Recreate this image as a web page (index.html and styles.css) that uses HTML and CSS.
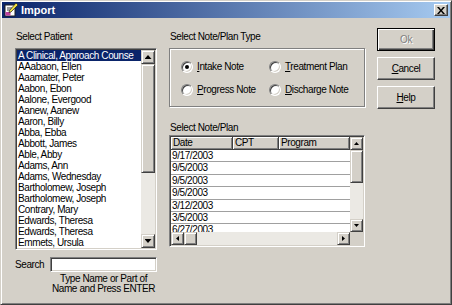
FILE: index.html
```html
<!DOCTYPE html>
<html lang="en">
<head>
    <meta charset="UTF-8">
    <title>Import</title>
    <link rel="stylesheet" href="styles.css">
</head>
<body>
<div class="window">
    <div class="titlebar">
        <svg class="app-icon" width="14" height="14" viewBox="0 0 14 14">
            <rect x="1" y="2" width="10" height="11" fill="#ffffff" stroke="#202020" stroke-width="1"/>
            <rect x="1.5" y="9" width="5" height="3.5" fill="#c040a0"/>
            <line x1="3" y1="5" x2="8" y2="5" stroke="#404040"/>
            <line x1="3" y1="7" x2="7" y2="7" stroke="#404040"/>
            <polygon points="12,0 14,2 7,9 5,9.5 5.5,7.5" fill="#f0e040" stroke="#202020" stroke-width="0.7"/>
        </svg>
        <span class="title">Import</span>
        <span class="close-btn">
            <svg width="8" height="7" viewBox="0 0 8 7">
                <path d="M0 0h2l2 2.5 2-2.5h2l-3 3.5 3 3.5h-2l-2-2.5-2 2.5h-2l3-3.5z" fill="#000"/>
            </svg>
        </span>
    </div>

    <div class="content">
        <!-- patient list -->
        <div class="col-patient">
            <div class="col-label">Select Patient</div>
            <div class="listbox">
                <ul class="list-items">
                    <li class="selected">A Clinical, Approach Counse</li>
                    <li>AAabaon, Ellen</li>
                    <li>Aaamater, Peter</li>
                    <li>Aabon, Ebon</li>
                    <li>Aalone, Evergood</li>
                    <li>Aanew, Aanew</li>
                    <li>Aaron, Billy</li>
                    <li>Abba, Ebba</li>
                    <li>Abbott, James</li>
                    <li>Able, Abby</li>
                    <li>Adams, Ann</li>
                    <li>Adams, Wednesday</li>
                    <li>Bartholomew, Joseph</li>
                    <li>Bartholomew, Joseph</li>
                    <li>Contrary, Mary</li>
                    <li>Edwards, Theresa</li>
                    <li>Edwards, Theresa</li>
                    <li>Emmets, Ursula</li>
                </ul>
                <div class="vscroll">
                    <span class="sb-btn arrow-up"></span>
                    <span class="sb-thumb list-thumb"></span>
                    <span class="sb-track"></span>
                    <span class="sb-btn arrow-down"></span>
                </div>
            </div>
            <div class="search-row">
                <span class="search-label">Search</span>
                <span class="search-input"></span>
            </div>
            <div class="search-hint">Type Name or Part of<br>Name and Press ENTER</div>
        </div>

        <!-- note type and note list -->
        <div class="col-notes">
            <div class="col-label">Select Note/Plan Type</div>
            <div class="groupbox">
                <div class="radio-item"><span class="radio checked"></span><span><u>I</u>ntake Note</span></div>
                <div class="radio-item"><span class="radio"></span><span><u>T</u>reatment Plan</span></div>
                <div class="radio-item"><span class="radio"></span><span><u>P</u>rogress Note</span></div>
                <div class="radio-item"><span class="radio"></span><span><u>D</u>ischarge Note</span></div>
            </div>
            <div class="col-label plan-label">Select Note/Plan</div>
            <div class="grid">
                <div class="grid-main">
                    <div class="grid-body">
                        <div class="grid-head">
                            <span class="head-cell cell-date">Date</span>
                            <span class="head-cell cell-cpt">CPT</span>
                            <span class="head-cell cell-program">Program</span>
                        </div>
                        <div class="grid-row">9/17/2003</div>
                        <div class="grid-row">9/5/2003</div>
                        <div class="grid-row">9/5/2003</div>
                        <div class="grid-row">9/5/2003</div>
                        <div class="grid-row">3/12/2003</div>
                        <div class="grid-row">3/5/2003</div>
                        <div class="grid-row">6/27/2003</div>
                    </div>
                    <div class="vscroll small">
                        <span class="sb-btn arrow-up"></span>
                        <span class="sb-thumb grid-thumb"></span>
                        <span class="sb-track"></span>
                        <span class="sb-btn arrow-down"></span>
                    </div>
                </div>
                <div class="hscroll">
                    <span class="sb-btn arrow-left"></span>
                    <span class="sb-thumb"></span>
                    <span class="sb-track"></span>
                    <span class="sb-btn arrow-right"></span>
                    <span class="sb-corner"></span>
                </div>
            </div>
        </div>

        <!-- buttons -->
        <div class="col-buttons">
            <span class="button default disabled">Ok</span>
            <span class="button"><u>C</u>ancel</span>
            <span class="button"><u>H</u>elp</span>
        </div>
    </div>
</div>
</body>
</html>
```

FILE: styles.css
```css
body {
    margin: 0;
    background-color: #d4d0c8;
    font-family: "Liberation Sans", Arial, sans-serif;
    font-size: 10px;
    letter-spacing: -0.4px;
    color: #000;
}

.window {
    width: 452px;
    height: 305px;
    box-sizing: border-box;
    border: 1px solid;
    border-color: #d4d0c8 #404040 #404040 #d4d0c8;
    box-shadow: inset 1px 1px #fff, inset -1px -1px #808080;
    padding: 1px;
    display: flex;
    flex-direction: column;
}

.titlebar {
    height: 16px;
    display: flex;
    align-items: center;
    background: linear-gradient(to right, #0a246a, #a6caf0);
    color: #fff;
}

.app-icon {
    margin-left: 2px;
    margin-right: 3px;
}

.title {
    flex: 1;
    font-weight: bold;
    font-size: 11px;
    letter-spacing: 0;
}

.close-btn {
    width: 14px;
    height: 12px;
    box-sizing: border-box;
    margin-right: 2px;
    background: #d4d0c8;
    border: 1px solid;
    border-color: #fff #404040 #404040 #fff;
    box-shadow: inset -1px -1px #808080;
    display: flex;
    align-items: center;
    justify-content: center;
}

.content {
    flex: 1;
    display: flex;
    gap: 12px;
    padding: 10px 0 0 13px;
}

.col-label {
    height: 20px;
    box-sizing: border-box;
    padding: 2px 0 0 1px;
    line-height: 13px;
}

.plan-label {
    height: 28px;
    padding-top: 14px;
}

/* sunken boxes */
.listbox,
.grid,
.search-input {
    box-sizing: border-box;
    border: 1px solid;
    border-color: #808080 #fff #fff #808080;
    box-shadow: inset 1px 1px #404040, inset -1px -1px #d4d0c8;
    padding: 1px;
    background: #fff;
}

.col-patient {
    width: 142px;
}

.listbox {
    height: 202px;
    display: flex;
}

.list-items {
    flex: 1;
    margin: 0;
    padding: 0;
    list-style: none;
    overflow: hidden;
}

.list-items li {
    height: 11px;
    line-height: 11px;
    padding-left: 1px;
    white-space: nowrap;
}

.list-items li.selected {
    background: #0a246a;
    color: #fff;
}

/* scrollbars */
.vscroll {
    width: 14px;
    display: flex;
    flex-direction: column;
}

.vscroll.small {
    width: 13px;
}

.hscroll {
    height: 13px;
    display: flex;
}

.sb-btn,
.sb-thumb {
    box-sizing: border-box;
    background: #d4d0c8;
    border: 1px solid;
    border-color: #d4d0c8 #404040 #404040 #d4d0c8;
    box-shadow: inset 1px 1px #fff, inset -1px -1px #808080;
    display: flex;
    align-items: center;
    justify-content: center;
    flex-shrink: 0;
}

.vscroll .sb-btn {
    height: 14px;
}

.vscroll.small .sb-btn {
    height: 13px;
}

.hscroll .sb-btn,
.hscroll .sb-thumb {
    width: 13px;
}

.list-thumb {
    height: 109px;
}

.grid-thumb {
    height: 33px;
}

.sb-track {
    flex: 1;
    background: #ebe9e4;
}

.sb-corner {
    width: 13px;
    background: #d4d0c8;
}

.sb-btn::after {
    content: "";
    background: #000;
}

.arrow-up::after {
    width: 7px;
    height: 4px;
    clip-path: polygon(50% 0, 100% 100%, 0 100%);
}

.arrow-down::after {
    width: 7px;
    height: 4px;
    clip-path: polygon(0 0, 100% 0, 50% 100%);
}

.small .arrow-up::after,
.small .arrow-down::after {
    width: 5px;
    height: 3px;
}

.arrow-left::after {
    width: 3px;
    height: 5px;
    clip-path: polygon(100% 0, 100% 100%, 0 50%);
}

.arrow-right::after {
    width: 3px;
    height: 5px;
    clip-path: polygon(0 0, 100% 50%, 0 100%);
}

/* search */
.search-row {
    display: flex;
    align-items: center;
    margin-top: 7px;
}

.search-label {
    width: 35px;
}

.search-input {
    width: 107px;
    height: 15px;
}

.search-hint {
    margin: 2px 0 0 35px;
    width: 107px;
    text-align: center;
    line-height: 10px;
    white-space: nowrap;
}

/* note type */
.col-notes {
    width: 196px;
}

.groupbox {
    height: 59px;
    box-sizing: border-box;
    border: 1px solid #808080;
    box-shadow: inset 1px 1px #fff, 1px 1px #fff;
    display: grid;
    grid-template-columns: 88px auto;
    row-gap: 11px;
    padding: 12px 0 0 11px;
    align-content: start;
}

.radio-item {
    display: flex;
    align-items: center;
    gap: 4px;
    height: 12px;
    line-height: 12px;
}

.radio {
    width: 12px;
    height: 12px;
    box-sizing: border-box;
    border-radius: 50%;
    border: 1px solid;
    border-color: #808080 #fff #fff #808080;
    box-shadow: inset 1px 1px #404040, inset -1px -1px #d4d0c8;
    background: #fff;
    display: flex;
    align-items: center;
    justify-content: center;
}

.radio.checked::after {
    content: "";
    width: 4px;
    height: 4px;
    border-radius: 50%;
    background: #000;
}

/* note grid */
.grid {
    height: 112px;
    display: flex;
    flex-direction: column;
}

.grid-main {
    flex: 1;
    display: flex;
    min-height: 0;
}

.grid-body {
    flex: 1;
    overflow: hidden;
}

.grid-head {
    display: flex;
    height: 13px;
}

.head-cell {
    box-sizing: border-box;
    background: #d4d0c8;
    border-right: 1px solid #404040;
    border-bottom: 1px solid #404040;
    box-shadow: inset 1px 1px #fff, inset -1px -1px #808080;
    padding-left: 2px;
    line-height: 12px;
}

.cell-date {
    width: 62px;
}

.cell-cpt {
    width: 46px;
}

.cell-program {
    flex: 1;
}

.grid-row {
    height: 11.4px;
    line-height: 11px;
    border-bottom: 1px solid #a0a0a0;
    padding-left: 1px;
}

/* buttons */
.col-buttons {
    width: 58px;
    display: flex;
    flex-direction: column;
    gap: 6px;
}

.button {
    height: 23px;
    box-sizing: border-box;
    border: 1px solid;
    border-color: #fff #404040 #404040 #fff;
    box-shadow: inset -1px -1px #808080;
    display: flex;
    align-items: center;
    justify-content: center;
}

.button.default {
    border-color: #000;
    box-shadow: inset 1px 1px #fff, inset -1px -1px #404040, inset -2px -2px #808080;
}

.button.disabled {
    color: #808080;
    text-shadow: 1px 1px #fff;
}
```
